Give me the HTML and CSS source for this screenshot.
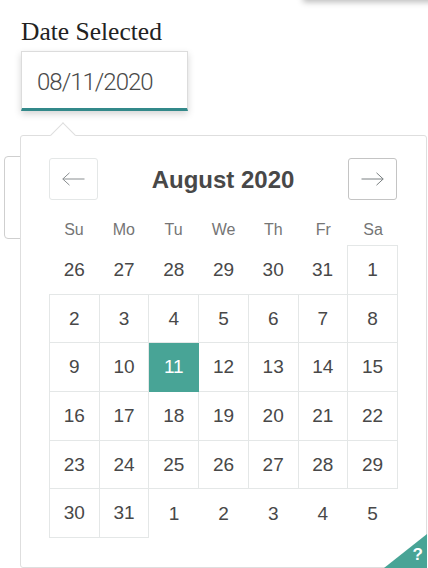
FILE: index.html
```html
<!DOCTYPE html>
<html lang="en">
<head>
<meta charset="utf-8">
<title>Date Selected</title>
<link rel="stylesheet" href="styles.css">
</head>
<body>
<div class="topbar"></div>
<main class="page">
  <label class="label" for="date">Date Selected</label>
  <div class="input-box">
    <input id="date" class="date-input" type="text" value="08/11/2020" readonly>
  </div>
  <div class="behind"></div>

  <section class="picker">
    <span class="caret"></span>
    <div class="nav">
      <button class="nav-btn" aria-label="Previous month">
        <svg width="23" height="14" viewBox="0 0 23 14"><path d="M0.8 7H22.5M0.8 7L7.5 0.8M0.8 7L7.5 13.2" fill="none" stroke="#8a8f91" stroke-width="1"/></svg>
      </button>
      <div class="title">August 2020</div>
      <button class="nav-btn hover" aria-label="Next month">
        <svg width="23" height="14" viewBox="0 0 23 14"><path d="M22.2 7H0.5M22.2 7L15.5 0.8M22.2 7L15.5 13.2" fill="none" stroke="#7b8082" stroke-width="1"/></svg>
      </button>
    </div>
    <div class="weekdays">
      <span>Su</span><span>Mo</span><span>Tu</span><span>We</span><span>Th</span><span>Fr</span><span>Sa</span>
    </div>
    <table class="month">
      <tr><td class="out">26</td><td class="out">27</td><td class="out">28</td><td class="out">29</td><td class="out">30</td><td class="out">31</td><td>1</td></tr>
      <tr><td>2</td><td>3</td><td>4</td><td>5</td><td>6</td><td>7</td><td>8</td></tr>
      <tr><td>9</td><td>10</td><td class="sel">11</td><td>12</td><td>13</td><td>14</td><td>15</td></tr>
      <tr><td>16</td><td>17</td><td>18</td><td>19</td><td>20</td><td>21</td><td>22</td></tr>
      <tr><td>23</td><td>24</td><td>25</td><td>26</td><td>27</td><td>28</td><td>29</td></tr>
      <tr><td>30</td><td>31</td><td class="out">1</td><td class="out">2</td><td class="out">3</td><td class="out">4</td><td class="out">5</td></tr>
    </table>
    <button class="shortcuts" aria-label="Keyboard shortcuts"><span>?</span></button>
  </section>
</main>
</body>
</html>
```

FILE: styles.css
```css
* { box-sizing: border-box; }
html, body { margin: 0; padding: 0; background: #fff; overflow: hidden; }
body { width: 428px; height: 568px; position: relative; }

.topbar {
  position: absolute;
  top: -20px;
  left: 303px;
  width: 140px;
  height: 20px;
  background: #fff;
  box-shadow: 0 2px 6px rgba(0,0,0,0.28);
}

.page {
  padding: 17px 0 0 21px;
  display: flex;
  flex-direction: column;
  align-items: flex-start;
}

.label {
  font-family: "Liberation Serif", "Times New Roman", serif;
  font-size: 25.5px;
  line-height: 30px;
  color: #222;
}

.input-box {
  margin-top: 4px;
  width: 167px;
  height: 60px;
  border: 1px solid #dcdcdc;
  border-bottom: 3px solid #33898a;
  background: #fff;
  box-shadow: 0 3px 7px rgba(0,0,0,0.17);
  display: flex;
  align-items: center;
  padding-top: 3px;
}

.date-input {
  border: 0;
  outline: 0;
  width: 100%;
  padding: 0 0 0 15px;
  background: transparent;
  font-family: Roboto, "Liberation Sans", sans-serif;
  font-weight: 300;
  font-size: 24px;
  letter-spacing: -1px;
  color: #4a4a4a;
}

.behind {
  margin-top: 45px;
  margin-left: -17px;
  width: 60px;
  height: 83px;
  border: 1px solid #cfcfcf;
  border-radius: 4px;
}

.picker {
  position: absolute;
  left: 20px;
  top: 135px;
  width: 407px;
  height: 433px;
  background: #fff;
  border: 1px solid #dedede;
  border-radius: 3px;
  padding: 22px 29px 0 28px;
  font-family: "Liberation Sans", Arial, sans-serif;
  color: #484848;
}

.caret {
  position: absolute;
  left: 33px;
  top: -10px;
  width: 18px;
  height: 18px;
  background: #fff;
  border-top: 1px solid #dedede;
  border-left: 1px solid #dedede;
  transform: rotate(45deg);
}

.nav {
  display: flex;
  align-items: center;
  height: 42px;
}

.nav-btn {
  width: 49px;
  height: 42px;
  border: 1px solid #e4e7e7;
  border-radius: 3px;
  background: #fff;
  padding: 0;
  display: flex;
  align-items: center;
  justify-content: center;
}
.nav-btn.hover { border-color: #c4c4c4; }

.title {
  flex: 1;
  text-align: center;
  font-weight: 700;
  font-size: 24px;
  color: #484848;
  padding-top: 2px;
}

.weekdays {
  margin-top: 15px;
  height: 30px;
  display: grid;
  grid-template-columns: repeat(7, 1fr);
  width: 349px;
  align-items: center;
  font-size: 16px;
  color: #757575;
  text-align: center;
}

.month {
  border-collapse: collapse;
  table-layout: fixed;
  width: 349px;
}
.month tr { height: 48.7px; }
.month td {
  border: 1px solid #e4e7e7;
  padding: 0;
  text-align: center;
  vertical-align: middle;
  font-size: 19px;
  color: #484848;
}
.month td.out { border: none; }
.month td.sel {
  background: #48a496;
  border-color: #48a496;
  color: #fff;
}

.shortcuts {
  position: absolute;
  right: -1px;
  bottom: -1px;
  width: 0;
  height: 0;
  padding: 0;
  border: 0;
  border-top: 34px solid transparent;
  border-right: 43px solid #48a496;
  background: transparent;
}
.shortcuts span {
  position: absolute;
  right: -39px;
  top: -22px;
  color: #fff;
  font-family: "Liberation Sans", Arial, sans-serif;
  font-weight: 700;
  font-size: 17px;
  line-height: 17px;
}
```
